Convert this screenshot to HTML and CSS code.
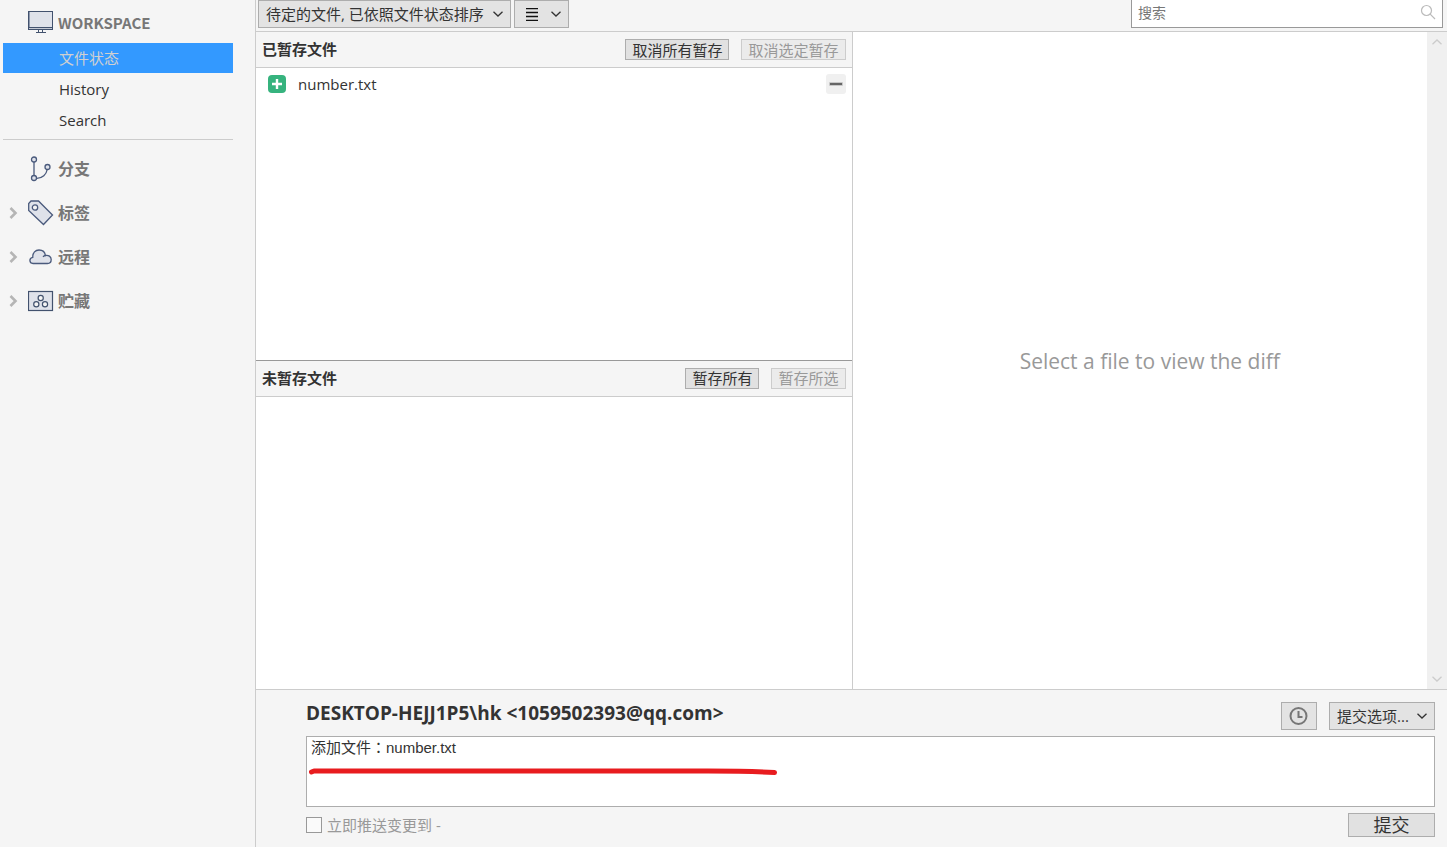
FILE: index.html
```html
<!DOCTYPE html>
<html lang="zh-CN">
<head>
  <meta charset="UTF-8">
  <title>文件状态</title>
  <meta name="viewport" content="width=device-width, initial-scale=1.0">
  <link rel="stylesheet" href="styles.css">
</head>
<body>
  <div class="app">
    <nav class="sidebar">
      <h2 class="workspace">
        <svg width="26" height="26" viewBox="0 0 26 26" fill="none" stroke="#42526e">
          <rect x="0.5" y="1.5" width="24" height="18" fill="#dfe2ea"/>
          <path d="M1 17.5h23M8 22.5h10M10.5 20v2M14.5 20v2"/>
          <path d="M1.5 2v15" stroke="#8e99ad"/>
          <path d="M1 18.5h23" stroke="#c5cad5"/>
        </svg>
        WORKSPACE
      </h2>
      <ul class="views">
        <li><a class="view active" href="#status">文件状态</a></li>
        <li><a class="view" href="#history">History</a></li>
        <li><a class="view" href="#search">Search</a></li>
      </ul>
      <div class="groups">
        <button class="group" type="button">
          <span class="caret"></span>
          <svg width="26" height="26" viewBox="0 0 26 26" fill="#dfe2ea" stroke="#4a5a7c" stroke-width="1.3">
            <path d="M6 6v14M8.500 22.300C14.500 22.500 18.500 18 19 14" fill="none"/>
            <circle cx="6" cy="3.500" r="2.500"/>
            <circle cx="6" cy="22" r="2.500"/>
            <circle cx="19.500" cy="11" r="2.500"/>
          </svg>
          分支
        </button>
        <button class="group" type="button">
          <svg class="caret" width="10" height="14" viewBox="0 0 10 14" fill="none" stroke="#b5b5b5" stroke-width="2.600"><path d="M2.500 2l5 5-5 5"/></svg>
          <svg width="26" height="26" viewBox="0 0 26 26" fill="#dfe2ea" stroke="#4a5a7c" stroke-width="1.3">
            <path d="M3 1H10.500L24.500 15 15.500 24.500 .7 10.500V3.500Z"/>
            <circle cx="7" cy="7.500" r="2.700" fill="#f5f5f5"/>
          </svg>
          标签
        </button>
        <button class="group" type="button">
          <svg class="caret" width="10" height="14" viewBox="0 0 10 14" fill="none" stroke="#b5b5b5" stroke-width="2.600"><path d="M2.500 2l5 5-5 5"/></svg>
          <svg width="26" height="26" viewBox="0 0 26 26" fill="#dfe2ea" stroke="#4a5a7c" stroke-width="1.3">
            <path d="M5 19.500C1 19.500 .8 13.800 4.800 13.300 4.500 8.500 7.500 6 11 6c3.500 0 6 2 6.400 5.500 3-.6 5.800 1 5.800 4 0 2.500-1.700 4-3.700 4Z"/>
            <path d="M15 12.800c.6-.7 1.500-1.200 2.500-1.300" fill="none"/>
          </svg>
          远程
        </button>
        <button class="group" type="button">
          <svg class="caret" width="10" height="14" viewBox="0 0 10 14" fill="none" stroke="#b5b5b5" stroke-width="2.600"><path d="M2.500 2l5 5-5 5"/></svg>
          <svg width="26" height="26" viewBox="0 0 26 26" fill="#dfe2ea" stroke="#42526e" stroke-width="1.2">
            <rect x="0.500" y="3.500" width="24" height="19"/>
            <g fill="#f5f5f5">
              <circle cx="12.700" cy="10" r="2.600"/>
              <circle cx="8.300" cy="16.200" r="2.600"/>
              <circle cx="17" cy="16.200" r="2.600"/>
            </g>
          </svg>
          贮藏
        </button>
      </div>
    </nav>

    <main class="main">
      <div class="toolbar">
        <div class="dropdown">
          <select class="control sort" aria-label="排序">
            <option>待定的文件, 已依照文件状态排序</option>
          </select>
          <svg class="chevron" width="10" height="6" viewBox="0 0 10 6" fill="none" stroke="#333" stroke-width="1.300"><path d="M.5 .7L5 5 9.500 .7"/></svg>
        </div>
        <button class="control layout" type="button" aria-label="列表">
          <svg width="12" height="13" viewBox="0 0 12 13" stroke="#111" stroke-width="1.300"><path d="M0 .5h12M0 4.500h12M0 8.500h12M0 12.500h12"/></svg>
          <svg width="10" height="6" viewBox="0 0 10 6" fill="none" stroke="#333" stroke-width="1.300"><path d="M.5 .7L5 5 9.500 .7"/></svg>
        </button>
        <div class="search">
          <input class="search-input" type="text" placeholder="搜索" aria-label="搜索">
          <svg width="16" height="16" viewBox="0 0 16 16" fill="none" stroke="#bbb" stroke-width="1.200"><circle cx="6.500" cy="6.500" r="5"/><path d="M10.200 10.200L15 15"/></svg>
        </div>
      </div>

      <div class="content">
        <div class="files">
          <section class="panel">
            <header class="panel-head">
              <h3>已暂存文件</h3>
              <button class="small" type="button">取消所有暂存</button>
              <button class="small" type="button" disabled>取消选定暂存</button>
            </header>
            <ul class="file-list">
              <li class="file">
                <svg width="18" height="18" viewBox="0 0 18 18"><rect width="18" height="18" rx="4" fill="#36b37e"/><path d="M9 4v10M4 9h10" stroke="#fff" stroke-width="2.400"/></svg>
                <span class="file-name">number.txt</span>
                <button class="unstage" type="button" aria-label="取消暂存">
                  <svg width="14" height="4" viewBox="0 0 14 4"><rect width="14" height="4" rx="1" fill="#c8c8c8"/><rect x="1" y="1" width="12" height="2" fill="#666"/></svg>
                </button>
              </li>
            </ul>
          </section>
          <section class="panel">
            <header class="panel-head">
              <h3>未暂存文件</h3>
              <button class="small" type="button">暂存所有</button>
              <button class="small" type="button" disabled>暂存所选</button>
            </header>
          </section>
        </div>
        <div class="diff">
          <p class="diff-empty">Select a file to view the diff</p>
          <div class="scrollbar">
            <svg width="10" height="6" viewBox="0 0 10 6" fill="none" stroke="#ccc" stroke-width="1.300"><path d="M.5 5.300L5 1 9.500 5.300"/></svg>
            <svg width="10" height="6" viewBox="0 0 10 6" fill="none" stroke="#ccc" stroke-width="1.300"><path d="M.5 .7L5 5 9.500 .7"/></svg>
          </div>
        </div>
      </div>

      <form class="commit">
        <div class="commit-head">
          <h1 class="author">DESKTOP-HEJJ1P5\hk &lt;1059502393@qq.com&gt;</h1>
          <button class="control recent" type="button" aria-label="历史消息">
            <svg width="20" height="20" viewBox="0 0 20 20" fill="none" stroke="#777" stroke-width="2"><circle cx="9.500" cy="10" r="8"/><path d="M9.500 5v6h4"/></svg>
          </button>
          <div class="dropdown">
            <select class="control options" aria-label="提交选项">
              <option>提交选项...</option>
            </select>
            <svg class="chevron" width="10" height="6" viewBox="0 0 10 6" fill="none" stroke="#333" stroke-width="1.300"><path d="M.5 .7L5 5 9.500 .7"/></svg>
          </div>
        </div>
        <div class="message-box">
          <textarea class="message" aria-label="提交信息" lang="zh-TW">添加文件：number.txt</textarea>
          <svg class="underline" width="470" height="10" viewBox="0 0 470 10" fill="none" stroke="#e81c1f" stroke-width="5" stroke-linecap="round" stroke-linejoin="round"><path d="M3.500 5L6 4 200 4 400 4C430 4 450 4.500 466.500 5.500"/></svg>
        </div>
        <div class="commit-foot">
          <input class="push" type="checkbox" id="push">
          <label for="push">立即推送变更到 -</label>
          <button class="submit" type="button">提交</button>
        </div>
      </form>
    </main>
  </div>
</body>
</html>
```

FILE: styles.css
```css
* { box-sizing: border-box; }
body { margin: 0; background: #f5f5f5; color: #333; font: 15px/20px "Open Sans", "Noto Sans CJK SC", sans-serif; }
h1, h2, h3, p, ul { margin: 0; padding: 0; }
ul { list-style: none; }
svg { flex: none; display: block; }
button, select, input, textarea { margin: 0; font: inherit; color: inherit; border-radius: 0; }

.app { display: grid; grid-template-columns: 256px 1fr; height: 100vh; }

/* sidebar */
.sidebar { border-right: 1px solid #ccc; padding: 0 22px 0 3px; }
.workspace { display: flex; align-items: center; gap: 4px; height: 43px; padding: 2px 0 0 25px; font-size: 15px; font-weight: 600; color: #777; font-family: "Noto Sans CJK SC", sans-serif; }
.views { border-bottom: 1px solid #ccc; padding-bottom: 3px; }
.view { display: block; height: 30px; margin-bottom: 1px; padding-left: 56px; line-height: 30px; color: #333; text-decoration: none; }
.view.active { background: #3399ff; color: #d0d0d0; }
.groups { padding-top: 7px; }
.group { display: flex; align-items: center; gap: 4px; width: 100%; height: 44px; padding: 0; background: none; border: none; font-size: 16px; font-weight: 600; color: #777; }
.caret { width: 10px; margin: 0 6px 0 5px; }

/* toolbar */
.main { display: flex; flex-direction: column; min-width: 0; }
.toolbar { display: flex; gap: 3px; height: 32px; padding: 0 4px 4px 2px; border-bottom: 1px solid #ccc; }
.control { height: 28px; background: #e3e3e3; border: 1px solid #adadad; }
.dropdown { display: grid; align-items: center; }
.dropdown > * { grid-area: 1 / 1; }
.dropdown select { appearance: none; padding: 0 25px 1px 7px; }
.dropdown .sort { padding-right: 26px; }
.chevron { justify-self: end; margin-right: 8px; pointer-events: none; }
.layout { display: flex; align-items: center; justify-content: space-between; width: 55px; padding: 0 7px 0 11px; }
.search { display: flex; align-items: flex-start; width: 312px; height: 28px; margin-left: auto; padding: 4px 6px 0; background: #fff; border: 1px solid #999; border-top: none; }
.search-input { flex: 1; min-width: 0; height: 18px; padding: 0; border: none; outline: none; font-size: 14px; }
.search-input::placeholder { color: #777; }

/* file lists and diff */
.content { flex: 1; display: grid; grid-template-columns: calc(50% + 1px) 1fr; min-height: 0; }
.files { display: grid; grid-template-rows: 1fr calc(50% + 1px); border-right: 1px solid #ccc; }
.panel { background: #fff; }
.panel + .panel { border-top: 1px solid #999; }
.panel-head { display: flex; align-items: center; gap: 12px; height: 36px; padding: 0 6px; background: #f5f5f5; border-bottom: 1px solid #ccc; }
.panel-head h3 { margin-right: auto; padding-bottom: 1px; font-size: 15px; font-weight: 600; }
.small { height: 21px; padding: 0 6px; background: #e1e1e1; border: 1px solid #adadad; line-height: 18px; }
.small:disabled { background: #ebebeb; border-color: #ccc; color: #999; }
.file { display: flex; align-items: center; gap: 12px; height: 32px; padding: 0 6px 0 12px; }
.file-name { flex: 1; }
.unstage { display: flex; align-items: center; justify-content: center; width: 20px; height: 20px; padding: 0; background: #f0f0f0; border: none; border-radius: 3px; }
.diff { display: flex; background: #fff; }
.diff-empty { flex: 1; align-self: center; padding-left: 20px; text-align: center; font-size: 21px; color: #999; }
.scrollbar { display: flex; flex-direction: column; align-items: center; justify-content: space-between; width: 20px; padding: 7px 0; background: #f0f0f0; }

/* commit form */
.commit { padding: 12px 12px 10px 50px; border-top: 1px solid #ccc; }
.commit-head { display: flex; gap: 12px; }
.author { flex: 1; font-size: 19px; line-height: 22px; font-weight: 700; }
.recent { display: flex; align-items: center; justify-content: center; width: 36px; padding: 0; }
.message-box { position: relative; margin: 6px 0; }
.message { display: block; width: 100%; height: 71px; padding: 1px 4px; background: #fff; border: 1px solid #adadad; outline: none; resize: none; font-family: "Liberation Sans", "Noto Sans CJK TC", sans-serif; }
.underline { position: absolute; left: 2px; top: 31px; pointer-events: none; }
.commit-foot { display: flex; align-items: center; gap: 5px; color: #999; }
.commit-foot label { padding-bottom: 1px; }
.push { appearance: none; width: 16px; height: 16px; background: #fafafa; border: 1px solid #999; }
.submit { width: 87px; height: 24px; margin-left: auto; padding: 0; background: #e1e1e1; border: 1px solid #adadad; font-size: 18px; line-height: 22px; color: #333; }
```
